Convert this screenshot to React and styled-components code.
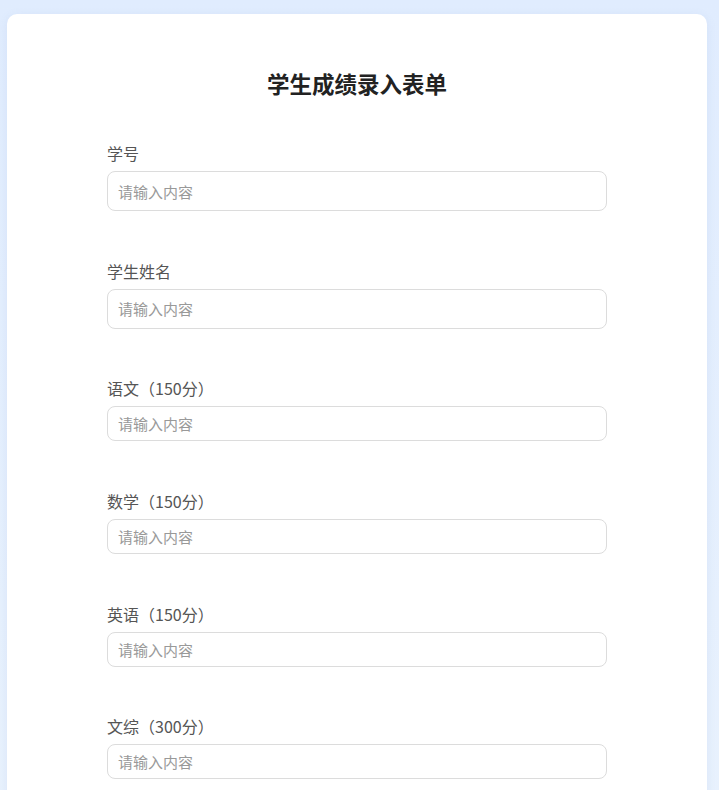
import React from 'react';
import styled, { createGlobalStyle } from 'styled-components';

const GlobalStyle = createGlobalStyle`
  html, body {
    margin: 0;
    padding: 0;
  }
  body {
    min-height: 100vh;
    background: linear-gradient(180deg, #e0ecfe 0%, #e9f2fd 100%);
    font-family: "Noto Sans CJK SC", "Noto Sans", sans-serif;
  }
`;

const Page = styled.div`
  padding: 14px 12px 40px 7px;
`;

const Card = styled.div`
  box-sizing: border-box;
  width: 700px;
  background: #ffffff;
  border-radius: 10px;
  box-shadow: 0 2px 10px rgba(120, 150, 200, 0.12);
  padding: 53px 100px 40px;
`;

const Title = styled.h2`
  margin: 0 0 42px;
  font-size: 22.5px;
  line-height: 32px;
  font-weight: 700;
  color: #222;
  text-align: center;
`;

const Field = styled.div`
  display: flex;
  flex-direction: column;
  gap: 6px;
  margin-bottom: 47.67px;
`;

const Label = styled.label`
  font-size: 16px;
  line-height: 24px;
  color: #555;
`;

const Input = styled.input`
  box-sizing: border-box;
  width: 100%;
  height: ${(props) => (props.tall ? '40px' : '35px')};
  padding: 0 10px;
  border: 1px solid #dcdcdc;
  border-radius: 8px;
  font-family: inherit;
  font-size: 15px;
  color: #333;
  outline: none;

  &::placeholder {
    color: #999;
  }
`;

const fields = [
  { label: '学号', tall: true },
  { label: '学生姓名', tall: true },
  { label: '语文（150分）' },
  { label: '数学（150分）' },
  { label: '英语（150分）' },
  { label: '文综（300分）' },
];

const App = () => (
  <>
    <GlobalStyle />
    <Page>
      <Card>
        <Title>学生成绩录入表单</Title>
        {fields.map((f) => (
          <Field key={f.label}>
            <Label>{f.label}</Label>
            <Input tall={f.tall} placeholder="请输入内容" />
          </Field>
        ))}
      </Card>
    </Page>
  </>
);

export default App;
